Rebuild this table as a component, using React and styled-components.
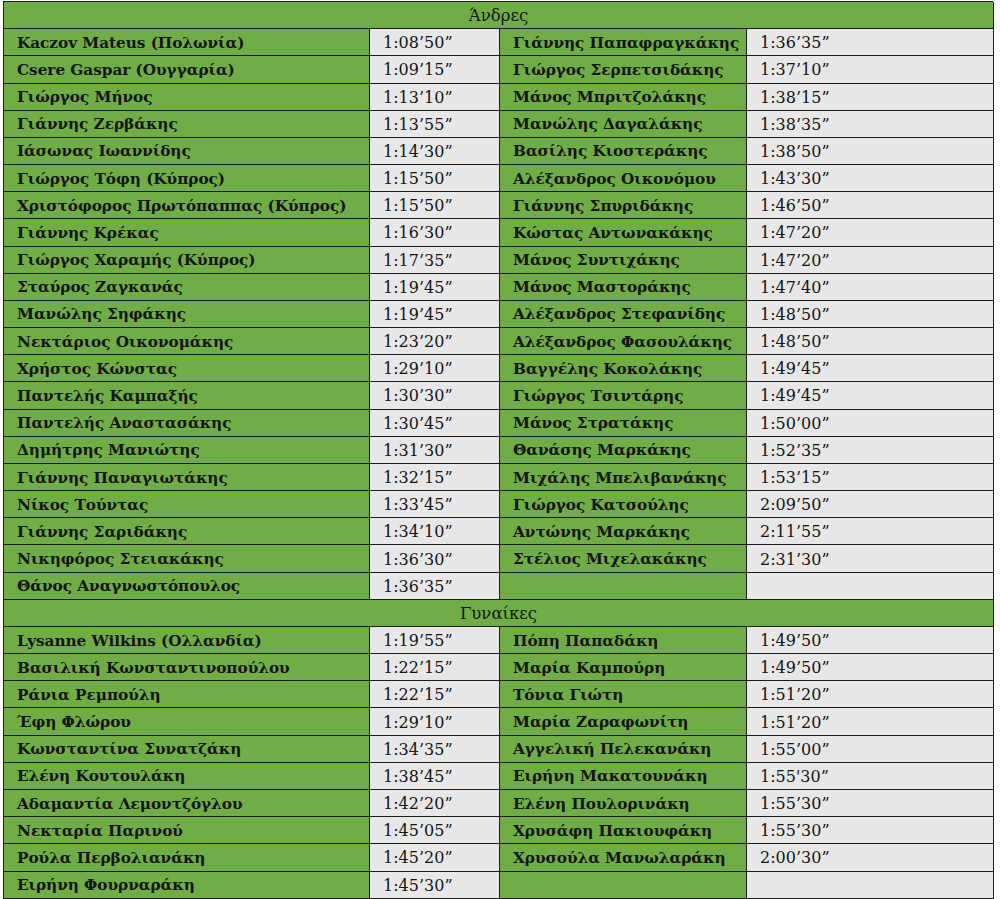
import React from "react";
import styled, { createGlobalStyle } from "styled-components";

const GlobalStyle = createGlobalStyle`
  html, body {
    margin: 0;
    padding: 0;
    background: #ffffff;
  }
`;

const Page = styled.div`
  padding: 1px 0 0 3px;
`;

const Sheet = styled.div`
  display: grid;
  grid-template-columns: 366px 130px 247px 247px;
  grid-auto-rows: 27.18px;
  width: 990px;
  border-top: 1px solid #1c1c1c;
  border-left: 1px solid #1c1c1c;
  box-sizing: border-box;
  font-family: "DejaVu Serif", "Liberation Serif", serif;
  color: #151515;
`;

const SectionTitle = styled.div`
  grid-column: 1 / -1;
  display: flex;
  align-items: center;
  justify-content: center;
  padding-top: 1px;
  background: #70ad47;
  border-right: 1px solid #1c1c1c;
  border-bottom: 1px solid #1c1c1c;
  font-size: 16.5px;
`;

const Cell = styled.div`
  display: flex;
  align-items: center;
  box-sizing: border-box;
  padding: 1px 0 0 ${(p) => (p.$time ? "13px" : "13px")};
  background: ${(p) => (p.$time ? "#e7e7e7" : "#70ad47")};
  border-right: 1px solid #1c1c1c;
  border-bottom: 1px solid #1c1c1c;
  font-size: ${(p) => (p.$time ? "16px" : "15.3px")};
  font-weight: ${(p) => (p.$time ? 400 : 700)};
  letter-spacing: ${(p) => (p.$time ? "0" : "-0.05px")};
  white-space: nowrap;
  overflow: hidden;
`;

const men = [
  ["Kaczov Mateus (Πολωνία)", "1:08’50”", "Γιάννης Παπαφραγκάκης", "1:36’35”"],
  ["Csere Gaspar (Ουγγαρία)", "1:09’15”", "Γιώργος Σερπετσιδάκης", "1:37’10”"],
  ["Γιώργος Μήνος", "1:13’10”", "Μάνος Μπριτζολάκης", "1:38’15”"],
  ["Γιάννης Ζερβάκης", "1:13’55”", "Μανώλης Δαγαλάκης", "1:38’35”"],
  ["Ιάσωνας Ιωαννίδης", "1:14’30”", "Βασίλης Κιοστεράκης", "1:38’50”"],
  ["Γιώργος Τόφη (Κύπρος)", "1:15’50”", "Αλέξανδρος Οικονόμου", "1:43’30”"],
  ["Χριστόφορος Πρωτόπαππας (Κύπρος)", "1:15’50”", "Γιάννης Σπυριδάκης", "1:46’50”"],
  ["Γιάννης Κρέκας", "1:16’30”", "Κώστας Αντωνακάκης", "1:47’20”"],
  ["Γιώργος Χαραμής (Κύπρος)", "1:17’35”", "Μάνος Συντιχάκης", "1:47’20”"],
  ["Σταύρος Ζαγκανάς", "1:19’45”", "Μάνος Μαστοράκης", "1:47’40”"],
  ["Μανώλης Σηφάκης", "1:19’45”", "Αλέξανδρος Στεφανίδης", "1:48’50”"],
  ["Νεκτάριος Οικονομάκης", "1:23’20”", "Αλέξανδρος Φασουλάκης", "1:48’50”"],
  ["Χρήστος Κώνστας", "1:29’10”", "Βαγγέλης Κοκολάκης", "1:49’45”"],
  ["Παντελής Καμπαξής", "1:30’30”", "Γιώργος Τσιντάρης", "1:49’45”"],
  ["Παντελής Αναστασάκης", "1:30’45”", "Μάνος Στρατάκης", "1:50’00”"],
  ["Δημήτρης Μανιώτης", "1:31’30”", "Θανάσης Μαρκάκης", "1:52’35”"],
  ["Γιάννης Παναγιωτάκης", "1:32’15”", "Μιχάλης Μπελιβανάκης", "1:53’15”"],
  ["Νίκος Τούντας", "1:33’45”", "Γιώργος Κατσούλης", "2:09’50”"],
  ["Γιάννης Σαριδάκης", "1:34’10”", "Αντώνης Μαρκάκης", "2:11’55”"],
  ["Νικηφόρος Στειακάκης", "1:36’30”", "Στέλιος Μιχελακάκης", "2:31’30”"],
  ["Θάνος Αναγνωστόπουλος", "1:36’35”", "", ""],
];

const women = [
  ["Lysanne Wilkins (Ολλανδία)", "1:19’55”", "Πόπη Παπαδάκη", "1:49’50”"],
  ["Βασιλική Κωνσταντινοπούλου", "1:22’15”", "Μαρία Καμπούρη", "1:49’50”"],
  ["Ράνια Ρεμπούλη", "1:22’15”", "Τόνια Γιώτη", "1:51’20”"],
  ["Έφη Φλώρου", "1:29’10”", "Μαρία Ζαραφωνίτη", "1:51’20”"],
  ["Κωνσταντίνα Συνατζάκη", "1:34’35”", "Αγγελική Πελεκανάκη", "1:55’00”"],
  ["Ελένη Κουτουλάκη", "1:38’45”", "Ειρήνη Μακατουνάκη", "1:55'30”"],
  ["Αδαμαντία Λεμοντζόγλου", "1:42’20”", "Ελένη Πουλορινάκη", "1:55’30”"],
  ["Νεκταρία Παρινού", "1:45’05”", "Χρυσάφη Πακιουφάκη", "1:55’30”"],
  ["Ρούλα Περβολιανάκη", "1:45’20”", "Χρυσούλα Μανωλαράκη", "2:00’30”"],
  ["Ειρήνη Φουρναράκη", "1:45’30”", "", ""],
];

function Section({ title, rows }) {
  return (
    <>
      <SectionTitle>{title}</SectionTitle>
      {rows.map(([name1, time1, name2, time2], i) => (
        <React.Fragment key={title + i}>
          <Cell>{name1}</Cell>
          <Cell $time>{time1}</Cell>
          <Cell>{name2}</Cell>
          <Cell $time>{time2}</Cell>
        </React.Fragment>
      ))}
    </>
  );
}

export default function App() {
  return (
    <>
      <GlobalStyle />
      <Page>
        <Sheet>
          <Section title="Άνδρες" rows={men} />
          <Section title="Γυναίκες" rows={women} />
        </Sheet>
      </Page>
    </>
  );
}
